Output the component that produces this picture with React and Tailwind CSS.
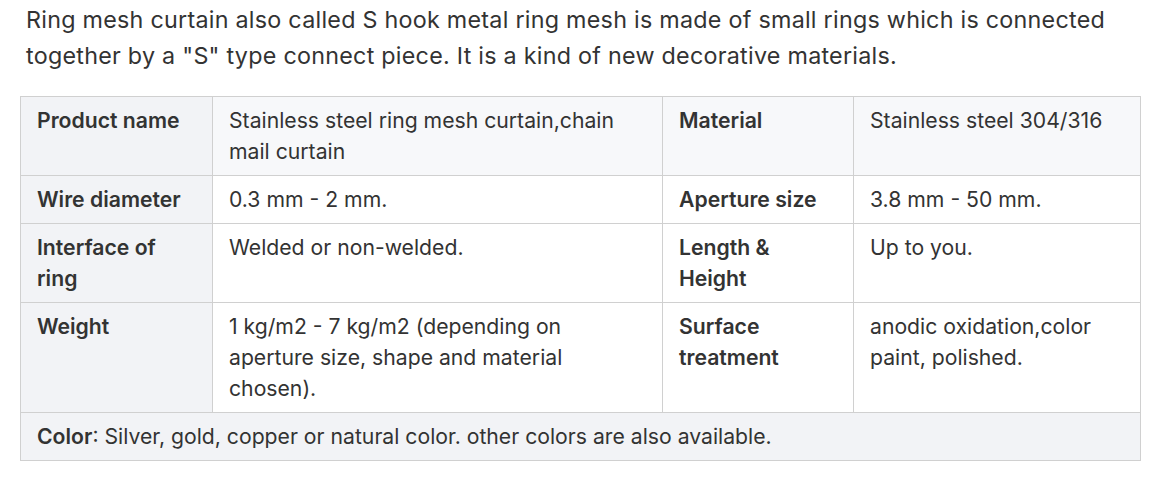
import React from "react";

const rows = [
  [
    "Product name",
    "Stainless steel ring mesh curtain,chain mail curtain",
    "Material",
    "Stainless steel 304/316",
  ],
  ["Wire diameter", "0.3 mm - 2 mm.", "Aperture size", "3.8 mm - 50 mm."],
  ["Interface of ring", "Welded or non-welded.", "Length & Height", "Up to you."],
  [
    "Weight",
    "1 kg/m2 - 7 kg/m2 (depending on aperture size, shape and material chosen).",
    "Surface treatment",
    "anodic oxidation,color paint, polished.",
  ],
];

const App = () => {
  return (
    <div className="bg-white min-h-screen pl-[20px] pt-[2px] font-['Inter','Liberation_Sans',sans-serif] text-[#333]">
      {/* Intro */}
      <p className="pl-[6px] w-[1110px] text-[23.3px] tracking-[0.26px] leading-[36px] mb-[22px]">
        Ring mesh curtain also called S hook metal ring mesh is made of small rings which is connected
        together by a "S" type connect piece. It is a kind of new decorative materials.
      </p>

      {/* Spec table */}
      <table className="w-[1120px] table-fixed border-collapse text-[21.2px] leading-[31px]">
        <colgroup>
          <col className="w-[192px]" />
          <col className="w-[450px]" />
          <col className="w-[191px]" />
          <col className="w-[287px]" />
        </colgroup>
        <tbody>
          {rows.map((r, i) => (
            <tr key={r[0]} className={i === 0 ? "bg-[#f7f8fa]" : "bg-white"}>
              <td className="border border-[#d0d0d0] bg-[#f2f3f6] px-4 py-2 align-top font-semibold">
                {r[0]}
              </td>
              <td className="border border-[#d0d0d0] px-4 py-2 align-top">{r[1]}</td>
              <td className="border border-[#d0d0d0] px-4 py-2 align-top font-semibold">{r[2]}</td>
              <td className="border border-[#d0d0d0] px-4 py-2 align-top">{r[3]}</td>
            </tr>
          ))}
          <tr className="bg-[#f2f3f6]">
            <td colSpan={4} className="border border-[#d0d0d0] px-4 py-2 align-top">
              <span className="font-semibold">Color</span>: Silver, gold, copper or natural color. other
              colors are also available.
            </td>
          </tr>
        </tbody>
      </table>
    </div>
  );
};

export default App;
